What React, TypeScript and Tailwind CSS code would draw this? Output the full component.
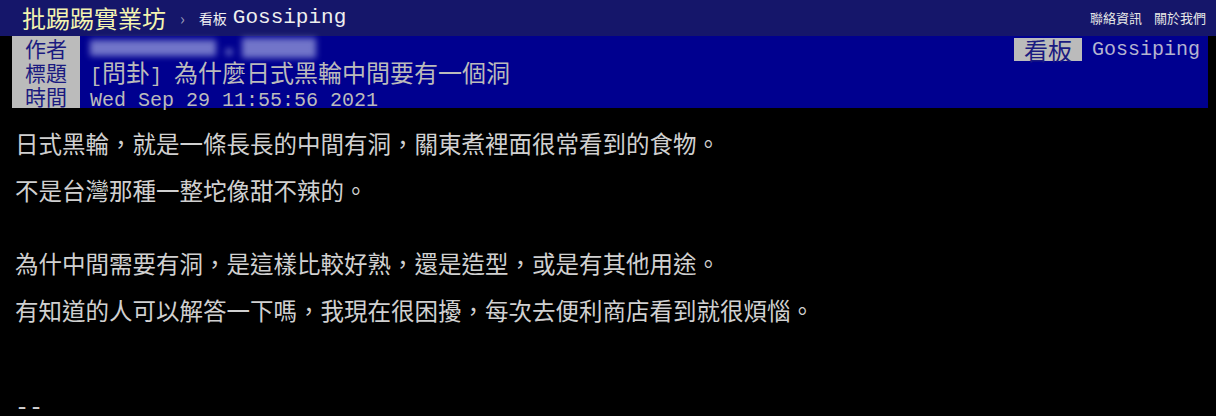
import React from "react";

const cjk = '"Noto Sans CJK TC", "Noto Sans CJK SC", sans-serif';
const mono = '"Liberation Mono", "Noto Sans CJK TC", monospace';

function L({ children }: { children: React.ReactNode }) {
  return <span style={{ fontFamily: mono }} className="text-[20px]">{children}</span>;
}

export default function App() {
  return (
    <div className="w-[1216px] h-[416px] overflow-hidden bg-black" style={{ fontFamily: cjk }}>
      {/* top bar */}
      <div className="h-[36px] bg-[#15166a] flex items-center pl-[22px] pr-[10px]">
        <span className="text-[24px] leading-[36px] text-[#f4f4b0]">批踢踢實業坊</span>
        <span className="ml-[14px] text-[16px] text-[#9a9ab8]">›</span>
        <span className="ml-[14px] text-[14px] text-[#f0f0f0]">看板</span>
        <span className="ml-[6px] text-[21px] text-[#eeeeee]" style={{ fontFamily: '"Liberation Mono", monospace' }}>Gossiping</span>
        <div className="ml-auto flex gap-[12px] text-[13px] text-[#e6e6e6]">
          <span>聯絡資訊</span>
          <span>關於我們</span>
        </div>
      </div>

      {/* meta */}
      <div className="ml-[12px] w-[1196px] h-[72px] bg-[#00008f] flex">
        <div className="w-[68px] bg-[#bbbbbb] text-[#1a1a80] text-[21px] flex flex-col items-center">
          <span className="h-[24px] leading-[24px]">作者</span>
          <span className="h-[24px] leading-[24px]">標題</span>
          <span className="h-[24px] leading-[24px]">時間</span>
        </div>
        <div className="flex-1 pl-[10px] text-[#bbbbbb] text-[24px] leading-[24px] flex flex-col">
          <div className="h-[24px] flex items-center">
            <div className="flex items-center gap-[10px] blur-[3px] opacity-80">
              <div className="w-[126px] h-[16px] bg-[#8f93d8]" />
              <div className="w-[6px] h-[6px] bg-[#8f93d8] mt-[8px]" />
              <div className="w-[74px] h-[20px] bg-[#8f93d8]" />
            </div>
          </div>
          <div className="h-[24px] whitespace-nowrap">
            <L>[</L>問卦<L>] </L>為什麼日式黑輪中間要有一個洞
          </div>
          <div className="h-[24px] whitespace-nowrap">
            <L>Wed Sep 29 11:55:56 2021</L>
          </div>
        </div>
        <div className="flex items-start pt-[2px] pr-[8px]">
          <span className="bg-[#bbbbbb] text-[#1a1a80] text-[24px] leading-[23px] px-[10px]">看板</span>
          <span className="ml-[10px] text-[#b4b4d0] text-[20px] leading-[23px]" style={{ fontFamily: mono }}>Gossiping</span>
        </div>
      </div>

      {/* content */}
      <div className="pl-[15px] text-[#d0d0d0] text-[23.5px] leading-[47px] pt-[12px]">
        <div>日式黑輪，就是一條長長的中間有洞，關東煮裡面很常看到的食物。</div>
        <div>不是台灣那種一整坨像甜不辣的。</div>
        <div className="mt-[26px]">為什中間需要有洞，是這樣比較好熟，還是造型，或是有其他用途。</div>
        <div>有知道的人可以解答一下嗎，我現在很困擾，每次去便利商店看到就很煩惱。</div>
        <div className="mt-[52px] leading-[24px] pt-[10px]" style={{ fontFamily: mono }}>--</div>
      </div>
    </div>
  );
}
